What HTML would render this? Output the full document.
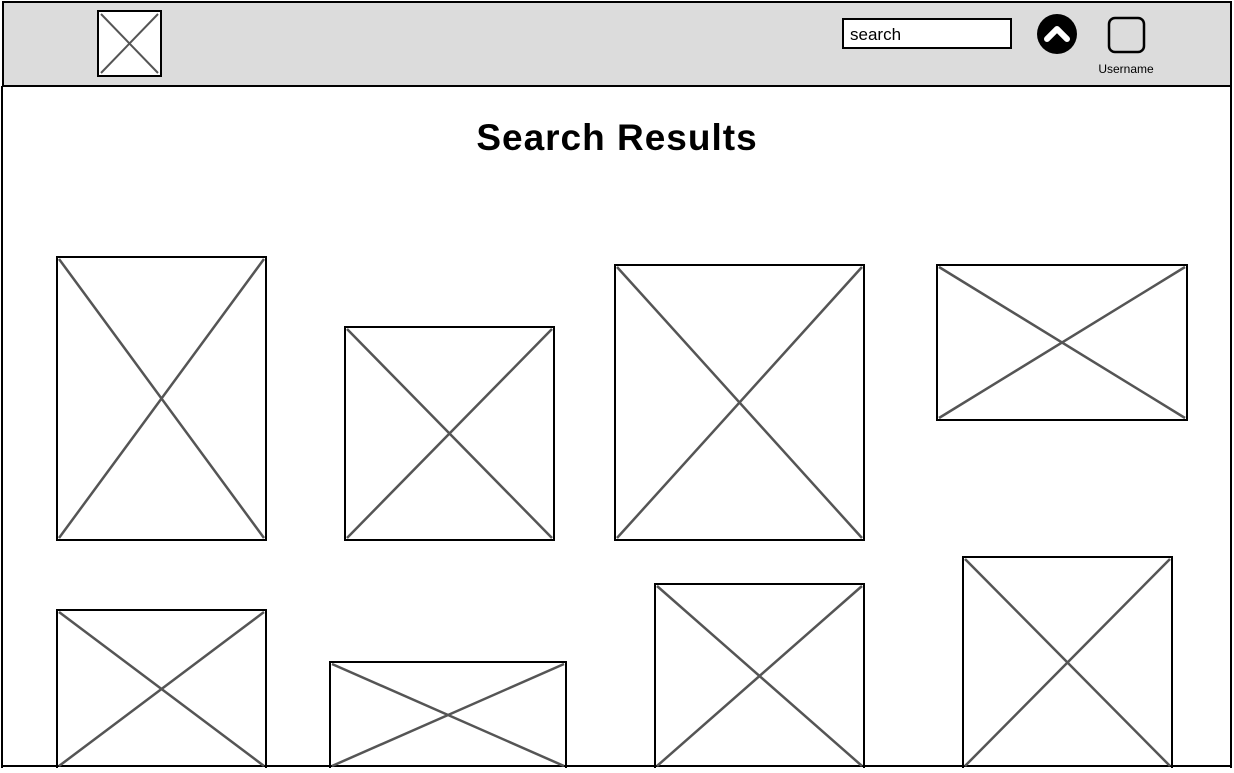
<!DOCTYPE html>
<html><head><style>
body{margin:0;width:1234px;height:768px;overflow:hidden;background:#fff;font-family:"Liberation Sans",sans-serif}
</style></head><body>
<svg width="1234" height="768" viewBox="0 0 1234 768" xmlns="http://www.w3.org/2000/svg">
<rect x="3" y="2" width="1228" height="84" fill="#dcdcdc" stroke="#000" stroke-width="2"/>
<line x1="2" y1="86" x2="2" y2="768" stroke="#000" stroke-width="2"/>
<line x1="1231" y1="86" x2="1231" y2="768" stroke="#000" stroke-width="2"/>
<line x1="2" y1="766" x2="1231" y2="766" stroke="#000" stroke-width="2"/>
<g fill="#fff" stroke="#000" stroke-width="2">
<rect x="98" y="11" width="63" height="65"/>
<rect x="843" y="19" width="168" height="29"/>
</g>
<path d="M101 14L158 73M158 14L101 73" stroke="#555" stroke-width="2"/>
<text x="850" y="40" font-size="17" fill="#000">search</text>
<circle cx="1057" cy="34" r="20" fill="#000"/>
<path d="M1047 39L1057 29L1067 39" stroke="#fff" stroke-width="6" fill="none" stroke-linecap="round" stroke-linejoin="round"/>
<rect x="1109" y="18" width="35" height="34" rx="6" fill="none" stroke="#000" stroke-width="2.5"/>
<text x="1126" y="73" font-size="12" text-anchor="middle" fill="#000">Username</text>
<text x="617" y="150" font-size="37" font-weight="bold" letter-spacing="1" text-anchor="middle" fill="#000">Search Results</text>
<g fill="none">
<g stroke="#000" stroke-width="2">
<rect x="57" y="257" width="209" height="283"/>
<rect x="345" y="327" width="209" height="213"/>
<rect x="615" y="265" width="249" height="275"/>
<rect x="937" y="265" width="250" height="155"/>
<rect x="57" y="610" width="209" height="160"/>
<rect x="330" y="662" width="236" height="110"/>
<rect x="655" y="584" width="209" height="186"/>
<rect x="963" y="557" width="209" height="213"/>
</g>
<g stroke="#555" stroke-width="2.5">
<path d="M59 259L264 538M264 259L59 538"/>
<path d="M347 329L552 538M552 329L347 538"/>
<path d="M617 267L862 538M862 267L617 538"/>
<path d="M939 267L1185 418M1185 267L939 418"/>
<path d="M59 612L264 766M264 612L59 766"/>
<path d="M332 664L564 766M564 664L332 766"/>
<path d="M657 586L862 766M862 586L657 766"/>
<path d="M965 559L1170 766M1170 559L965 766"/>
</g>
</g>
</svg>
</body></html>
